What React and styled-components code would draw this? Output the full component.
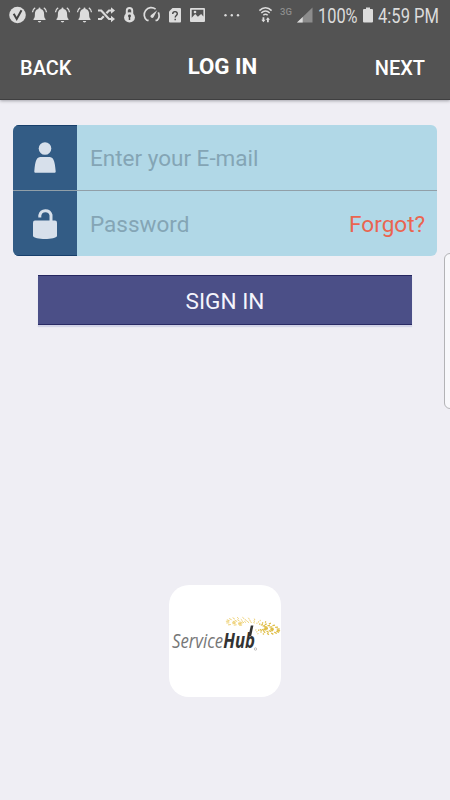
import React from "react";
import styled, { createGlobalStyle } from "styled-components";

const Global = createGlobalStyle`
  * { box-sizing: border-box; }
  body { margin: 0; background: #efeef4; font-family: Roboto, "Liberation Sans", sans-serif; }
`;

const Screen = styled.div`
  position: relative;
  width: 450px;
  height: 800px;
  overflow: hidden;
  display: flex;
  flex-direction: column;
  background: #efeef4;
`;

const Top = styled.header`
  flex: none;
  height: 100px;
  background: #535353;
  border-bottom: 1px solid #3f3f40;
  box-shadow: 0 1px 3px rgba(70, 70, 80, 0.45);
`;

const StatusBar = styled.div`
  height: 32px;
  display: flex;
  align-items: center;
  padding-left: 9px;
  color: #dcdcdc;
`;

const StatusIcon = styled.svg`
  flex: none;
  display: block;
  width: ${(p) => p.$w}px;
  height: 18px;
  margin-top: -2px;
  margin-left: ${(p) => p.$gap || 0}px;
  overflow: visible;
`;

const StatusText = styled.span`
  flex: none;
  width: ${(p) => p.$w}px;
  margin-left: ${(p) => p.$gap}px;
  padding-top: 2px;
  font-size: 19.5px;
  line-height: 30px;
  white-space: nowrap;
  transform: scaleX(${(p) => p.$scale});
  transform-origin: left center;
`;

const Network = styled.span`
  width: 12px;
  margin: 0 5px 9px 8px;
  font-size: 9.5px;
  line-height: 12px;
  font-weight: 500;
  color: #8d8d8d;
`;

const NavBar = styled.nav`
  height: 67px;
  display: grid;
  grid-template-columns: 1fr auto 1fr;
  align-items: center;
  padding: 5px 25px 0 20px;
  color: #fff;
`;

const NavAction = styled.a`
  font-size: 20px;
  line-height: 24px;
  font-weight: 500;
  text-align: ${(p) => p.$align || "left"};
`;

const Title = styled.h1`
  margin: 0 0 5px;
  font-size: 22.3px;
  line-height: 26px;
  font-weight: 700;
`;

const Form = styled.form`
  width: 424.5px;
  height: 131px;
  margin: 25px 0 0 12.8px;
  display: flex;
  flex-direction: column;
  border-radius: 6px;
  overflow: hidden;
  background: #b1d8e7;
`;

const Field = styled.div`
  height: ${(p) => (p.$divided ? 66 : 65)}px;
  display: flex;
  align-items: stretch;
  border-bottom: ${(p) => (p.$divided ? "1px solid #919fa8" : "none")};
`;

const FieldIcon = styled.div`
  width: 64.5px;
  display: flex;
  align-items: center;
  justify-content: center;
  background: #335c85;
  box-shadow: inset 0 ${(p) => (p.$last ? -1 : 1)}px 0 #173f6b;

  svg { display: block; }
`;

const Placeholder = styled.span`
  flex: 1;
  padding: 1px 0 0 12.7px;
  align-self: center;
  font-size: 22.5px;
  line-height: 27px;
  color: #84a5b5;
`;

const Forgot = styled.a`
  align-self: center;
  padding: 2px 12px 0 0;
  font-size: 22.6px;
  line-height: 28px;
  color: #ea6550;
`;

const SignIn = styled.button`
  flex: none;
  width: 374px;
  height: 50px;
  margin: 19px 0 0 38px;
  padding: 3px 0 0;
  border: 0;
  border-top: 1px solid #25265f;
  border-bottom: 1px solid #292a64;
  background: #4b4f87;
  box-shadow: 0 2px 1px #d3d4e6;
  color: #f4f4fc;
  font: 400 22.6px/28px Roboto, "Liberation Sans", sans-serif;
`;

const EdgeHandle = styled.div`
  position: absolute;
  left: 444px;
  top: 253px;
  width: 12px;
  height: 156px;
  border: 1px solid #b3b3b6;
  border-radius: 6px;
  background: #f8f8fb;
`;

const LogoTile = styled.div`
  width: 112px;
  height: 112px;
  margin: auto 0 103px 169px;
  border-radius: 20px;
  background: #fff;
  overflow: hidden;

  svg { display: block; }
`;

const Bell = ({ gap }) => (
  <StatusIcon $w={15} $gap={gap} viewBox="0 0 15 18">
    <path d="M7.5 1.500a1 1 0 0 1 1 1v.5c2.600.500 3.600 2.300 3.600 5 0 3.100.4 4.200 1.400 4.900v1.200H1.500v-1.200c1-.7 1.400-1.800 1.400-4.900 0-2.700 1-4.500 3.600-5v-.5a1 1 0 0 1 1-1zM5.800 15h3.400a1.700 1.500 0 0 1-3.400 0z" fill="currentColor" />
    <path d="M3.200 1.900C1.600 2.800.6 4.200.5 6.300M11.800 1.900c1.600.9 2.600 2.300 2.700 4.400" fill="none" stroke="currentColor" strokeWidth="1.300" />
  </StatusIcon>
);

const StatusIcons = () => (
  <>
    <StatusIcon $w={17} viewBox="0 0 17 18">
      <circle cx="8.5" cy="9" r="8.300" fill="currentColor" />
      <path d="M4.700 7.800l3 5.200L12.500 4.200" fill="none" stroke="#424242" strokeWidth="2" />
    </StatusIcon>
    <Bell gap={6} />
    <Bell gap={7.5} />
    <Bell gap={7.5} />
    <StatusIcon $w={17} $gap={6} viewBox="0 0 17 18">
      <path d="M0 4.500h3.200L11 13h3M0 13h3.200l2.600-2.800M8.400 7.300L11 4.500h3" fill="none" stroke="currentColor" strokeWidth="2.200" />
      <path d="M13 1.200l4 3.300-4 3.300zM13 9.700l4 3.300-4 3.300z" fill="currentColor" />
    </StatusIcon>
    <StatusIcon $w={11} $gap={9} viewBox="0 0 11 18">
      <path d="M2.800 8V4.600a2.700 2.700 0 0 1 5.400 0V8" fill="none" stroke="currentColor" strokeWidth="2" />
      <ellipse cx="5.500" cy="11.400" rx="5.400" ry="5.100" fill="currentColor" />
      <path d="M5.500 9v5" stroke="#484848" strokeWidth="1.500" />
      <circle cx="5.500" cy="10" r="1.400" fill="#484848" />
    </StatusIcon>
    <StatusIcon $w={16} $gap={9} viewBox="0 0 16 18">
      <path d="M3 14.400A7 7 0 0 1 11.600 3.100M14.300 6.400a7 7 0 0 1-1.200 8M3 14.400h1.600M13.100 14.400h-1.600" fill="none" stroke="currentColor" strokeWidth="1.700" />
      <path d="M13.200 4.300L9.500 11.300A1.700 1.700 0 0 1 6.800 9.200z" fill="currentColor" />
    </StatusIcon>
    <StatusIcon $w={12} $gap={9} viewBox="0 0 12 18">
      <path d="M3.500 2H11a1 1 0 0 1 1 1v12.500a1 1 0 0 1-1 1H1a1 1 0 0 1-1-1v-10z" fill="currentColor" />
      <path d="M3.700 7.900c0-3 4.600-3 4.600-.2 0 1.800-2.100 1.800-2.100 3.800M6.200 12.700v1.500" fill="none" stroke="#464646" strokeWidth="1.400" />
    </StatusIcon>
    <StatusIcon $w={15} $gap={9} viewBox="0 0 15 18">
      <path fillRule="evenodd" d="M1 2h13a1 1 0 0 1 1 1v12a1 1 0 0 1-1 1H1a1 1 0 0 1-1-1V3a1 1 0 0 1 1-1zm.7 1.700v8L5.200 8l2.700 2.800 3.200-2.700 2.300 2.300V3.700z" fill="currentColor" />
      <circle cx="5" cy="6" r="1.300" fill="currentColor" />
    </StatusIcon>
    <StatusIcon $w={16} $gap={19} viewBox="0 0 16 18">
      <g fill="currentColor"><circle cx="1.500" cy="9.200" r="1.200" /><circle cx="7.800" cy="9.200" r="1.200" /><circle cx="14" cy="9.200" r="1.200" /></g>
    </StatusIcon>
    <StatusIcon $w={13} $gap={19} viewBox="0 0 13 18">
      <path d="M.4 4.600c3.700-3.700 8.500-3.700 12.200 0M2.300 7c2.600-2.600 5.800-2.600 8.400 0M4.300 9.300c1.600-1.400 2.800-1.400 4.400 0" fill="none" stroke="currentColor" strokeWidth="1.500" />
      <path d="M3.500 11.200h1.800v2.600h1.200L4.400 16.300l-2.100-2.500h1.200zM8 16.300v-2.600H6.800l2.100-2.500 2.100 2.500H9.800v2.600z" fill="currentColor" />
    </StatusIcon>
    <Network>3G</Network>
    <StatusIcon $w={16} viewBox="0 0 16 18">
      <path d="M15.500 1.500V16.500H0z" fill="#8c8c8c" />
      <path d="M5.700 11V16.500H0z" fill="currentColor" />
    </StatusIcon>
    <StatusText $w={40} $gap={4.500} $scale={0.84}>100%</StatusText>
    <StatusIcon $w={10} $gap={5} viewBox="0 0 10 18">
      <path d="M3 1.500h4V3h2a1 1 0 0 1 1 1v11.500a1 1 0 0 1-1 1H1a1 1 0 0 1-1-1V4a1 1 0 0 1 1-1h2z" fill="currentColor" />
    </StatusIcon>
    <StatusText $w={62} $gap={5} $scale={0.85}>4:59 PM</StatusText>
  </>
);

const UserIcon = () => (
  <svg width="24" height="32" viewBox="0 0 24 32" fill="#d7e0eb">
    <circle cx="12" cy="6.500" r="6.300" />
    <path d="M7.500 15h9c3.600 0 5.300 3 6.200 14.300.1 1-.5 1.500-1.500 1.500H2.800c-1 0-1.600-.5-1.500-1.500C2.200 18 3.900 15 7.500 15z" />
  </svg>
);

const LockIcon = () => (
  <svg width="24" height="32" viewBox="0 0 24 32">
    <path d="M6.800 9.500V7.300A5.800 5.800 0 0 1 18 7V14" fill="none" stroke="#d7e0eb" strokeWidth="3" />
    <path d="M2 12.500h20q2 0 2 2v13.500C23 32 1 32 0 28V14.500q0-2 2-2z" fill="#d7e0eb" />
  </svg>
);

const rays = Array.from({ length: 28 }, (_, i) => (i * Math.PI * 2) / 28);
const rings = [0.55, 0.77, 1];

const Logo = () => (
  <svg width="112" height="112" viewBox="0 0 112 112">
    <g transform="translate(84 41) rotate(10)">
      {rings.map((r, ring) =>
        rays.map((a, i) => {
          const x = Math.cos(a);
          const y = Math.sin(a);
          const underWordmark = x < 0.15 && y > 0.45;
          if (underWordmark) return null;
          return (
            <line
              key={`${ring}-${i}`}
              x1={27.500 * r * x}
              y1={7.500 * r * y}
              x2={27.500 * (r - 0.11) * x + (Math.abs(x) < 0.6 ? 0.8 : 0)}
              y2={7.500 * (r - 0.11) * y - Math.sign(y) * 0.5}
              stroke={x > 0.3 ? "#dfbd45" : "#edcf70"}
              strokeWidth={x > 0.3 ? 1.300 : 0.900}
            />
          );
        })
      )}
    </g>
    <text x="3" y="63.300" fontFamily="'Open Sans', 'Noto Sans', sans-serif" fontStyle="italic" fontSize="20.500" fill="#777" textLength="83" lengthAdjust="spacingAndGlyphs">
      Service<tspan fontWeight="700" fill="#333">Hub</tspan>
    </text>
    <path d="M79.500 51l2.300-10.500h2.600l-2.200 10.500z" fill="#333" />
    <circle cx="86.500" cy="64" r="1.200" fill="none" stroke="#999" strokeWidth=".6" />
  </svg>
);

export default function App() {
  return (
    <Screen>
      <Global />
      <Top>
        <StatusBar><StatusIcons /></StatusBar>
        <NavBar>
          <NavAction>BACK</NavAction>
          <Title>LOG IN</Title>
          <NavAction $align="right">NEXT</NavAction>
        </NavBar>
      </Top>
      <Form>
        <Field $divided>
          <FieldIcon><UserIcon /></FieldIcon>
          <Placeholder>Enter your E-mail</Placeholder>
        </Field>
        <Field>
          <FieldIcon $last><LockIcon /></FieldIcon>
          <Placeholder>Password</Placeholder>
          <Forgot>Forgot?</Forgot>
        </Field>
      </Form>
      <SignIn type="button">SIGN IN</SignIn>
      <LogoTile><Logo /></LogoTile>
      <EdgeHandle />
    </Screen>
  );
}
